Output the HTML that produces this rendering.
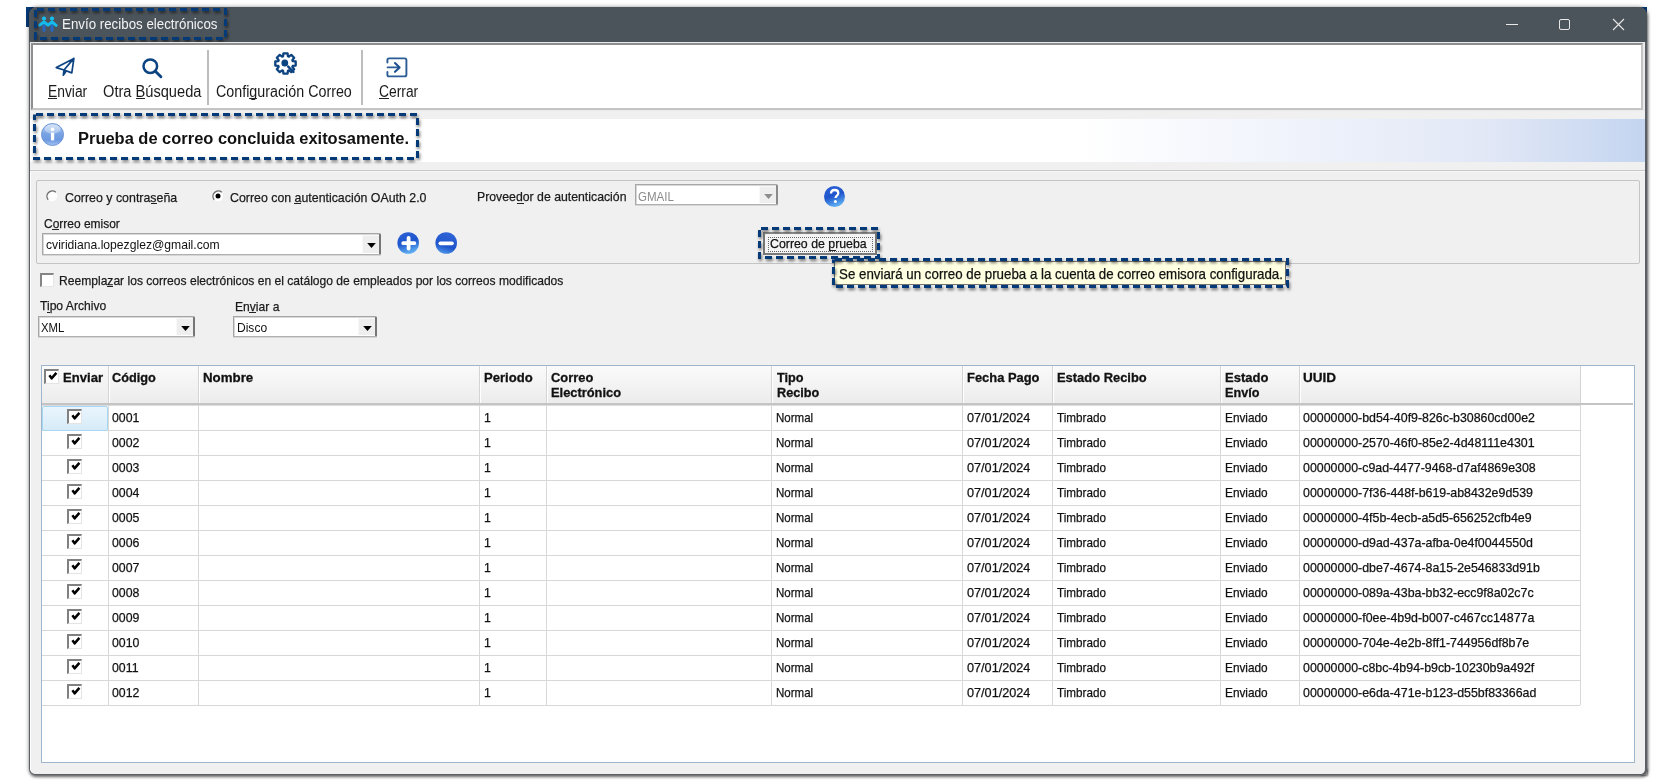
<!DOCTYPE html><html><head><meta charset="utf-8"><style>
*{box-sizing:border-box}
body{margin:0;width:1656px;height:784px;background:#fff;position:relative;overflow:hidden;font-family:'Liberation Sans', sans-serif}
.a{position:absolute}
.t{position:absolute;white-space:nowrap;line-height:0;transform-origin:0 0}
</style></head><body>
<div class="a" style="left:26px;top:7px;width:8px;height:20px;background:#063b79"></div>
<div class="a" style="left:1640px;top:7px;width:7px;height:6px;background:#063b79"></div>
<div class="a" style="left:1640px;top:768px;width:7px;height:7px;background:#dcdcdc;box-shadow:1px 1px 2px rgba(0,0,0,.4)"></div>
<div class="a" style="left:29px;top:7px;width:1618px;height:768px;background:#f0f0f0;border-radius:8px 8px 6px 6px;border:1px solid #5a6066;border-right-width:2px;box-shadow:0 0 4px rgba(0,0,0,.4),1px 2px 3px rgba(0,0,0,.5)"></div>
<div class="a" style="left:29px;top:7px;width:1618px;height:35px;background:#4c545b;border-radius:8px 8px 0 0"></div>
<svg class="a" style="left:36px;top:12px" width="25" height="22" viewBox="0 0 25 22">
<path d="M8 13.5 V18.3 M16 13.5 V18.3" stroke="#2767bf" stroke-width="3.2" stroke-linecap="round"/>
<path d="M3.6 13.2 L8 10 L12 13.2 L16 10 L20.2 13.4" stroke="#14bbee" stroke-width="2.9" fill="none" stroke-linecap="round" stroke-linejoin="round"/>
<circle cx="8" cy="6.6" r="2.1" fill="#14bff0"/><circle cx="16" cy="6.6" r="2.1" fill="#14bff0"/>
</svg>
<div class="t" style="left:62px;top:24px;font-size:14.5px;color:#f2f2f2;transform:scaleX(0.9188)">Envío recibos electrónicos</div>
<svg style="position:absolute;left:30px;top:4px;overflow:visible;filter:drop-shadow(1px 2px 1.5px rgba(0,0,0,.55))" width="201" height="40"><rect x="5.5" y="5.5" width="190" height="29" fill="none" stroke="#053a78" stroke-width="3" stroke-dasharray="7 4" stroke-dashoffset="-1.5"/></svg>
<div class="a" style="left:1506px;top:24px;width:12px;height:1px;background:#e8e8e8"></div>
<div class="a" style="left:1559px;top:19px;width:11px;height:11px;border:1px solid #e8e8e8;border-radius:2px"></div>
<svg class="a" style="left:1612px;top:18px" width="13" height="13"><path d="M1 1 L12 12 M12 1 L1 12" stroke="#e8e8e8" stroke-width="1.1"/></svg>
<div class="a" style="left:30px;top:42px;width:1615px;height:69px;background:#e9e9e9"></div>
<div class="a" style="left:31px;top:43px;width:1612px;height:67px;background:#fff;border-top:2px solid #8e8e8e;border-left:2px solid #8e8e8e;border-bottom:2px solid #c4c4c4;border-right:2px solid #c4c4c4"></div>
<div class="a" style="left:207px;top:50px;width:2px;height:55px;background:#bdbdbd"></div>
<div class="a" style="left:361px;top:50px;width:2px;height:55px;background:#bdbdbd"></div>
<svg class="a" style="left:50px;top:52px" width="30" height="30" viewBox="0 0 30 30">
<path d="M6.3 15.6 L23.9 6.4 L21.8 20.9 L14 18 Z M14 18 L23.9 6.4 M14 18 L13.3 23.2 L16.2 19" fill="none" stroke="#0c4381" stroke-width="1.7" stroke-linejoin="round" stroke-linecap="round"/></svg>
<svg class="a" style="left:140px;top:56px" width="26" height="24" viewBox="0 0 26 24">
<circle cx="10.3" cy="10.2" r="6.8" fill="none" stroke="#0c4381" stroke-width="2.5"/><path d="M15.3 15.3 L20.9 20.8" stroke="#0c4381" stroke-width="2.9" stroke-linecap="round"/></svg>
<svg class="a" style="left:273.5px;top:51.8px" width="23" height="23" viewBox="0 0 23 23">
<polygon points="9.04,4.31 9.43,1.31 13.57,1.31 13.96,4.31 14.84,4.67 17.25,2.83 20.17,5.75 18.33,8.16 18.69,9.04 21.69,9.43 21.69,13.57 18.69,13.96 18.33,14.84 20.17,17.25 17.25,20.17 14.84,18.33 13.96,18.69 13.57,21.69 9.43,21.69 9.04,18.69 8.16,18.33 5.75,20.17 2.83,17.25 4.67,14.84 4.31,13.96 1.31,13.57 1.31,9.43 4.31,9.04 4.67,8.16 2.83,5.75 5.75,2.83 8.16,4.67" fill="none" stroke="#0c4381" stroke-width="2.3" stroke-linejoin="round"/>
<ellipse cx="10.8" cy="11" rx="3.4" ry="3.6" fill="#0c4381"/><path d="M14.2 14.6 L19.5 20" stroke="#0c4381" stroke-width="2.4" stroke-linecap="round"/>
<path d="M15.5 12.2 L17 13.8" stroke="#fff" stroke-width="1"/></svg>
<svg class="a" style="left:380px;top:50px" width="35" height="35" viewBox="0 0 35 35">
<path d="M7.4 12.5 V10 Q7.4 8.4 9 8.4 H24.8 Q26.4 8.4 26.4 10 V24.8 Q26.4 26.4 24.8 26.4 H9 Q7.4 26.4 7.4 24.8 V22" fill="none" stroke="#2b5c96" stroke-width="1.9" stroke-linecap="round"/>
<path d="M7.6 17.4 H18.5" stroke="#2b5c96" stroke-width="1.9" stroke-linecap="round"/>
<path d="M15 13 L19.6 17.4 L15 21.8" fill="none" stroke="#1f5090" stroke-width="2.1" stroke-linecap="round" stroke-linejoin="round"/></svg>
<div class="t" style="left:48px;top:92px;font-size:16px;color:#1a1a1a;transform:scaleX(0.8642)">Enviar</div>
<div class="a" style="left:48px;top:98px;width:9px;height:1px;background:#222"></div>
<div class="t" style="left:102.5px;top:92px;font-size:16px;color:#1a1a1a;transform:scaleX(0.9143)">Otra Búsqueda</div>
<div class="a" style="left:136px;top:98px;width:9px;height:1px;background:#222"></div>
<div class="t" style="left:216px;top:92px;font-size:16px;color:#1a1a1a;transform:scaleX(0.8930)">Configuración Correo</div>
<div class="a" style="left:249px;top:98px;width:8px;height:1px;background:#222"></div>
<div class="t" style="left:379px;top:92px;font-size:16px;color:#1a1a1a;transform:scaleX(0.8645)">Cerrar</div>
<div class="a" style="left:379px;top:98px;width:10px;height:1px;background:#222"></div>
<div class="a" style="left:30px;top:119px;width:1615px;height:43px;background:linear-gradient(to right,#ffffff 0%,#ffffff 65%,#f2f5fc 76%,#e2e8f6 90%,#c4d5f0 100%)"></div>
<svg class="a" style="left:40px;top:122px" width="25" height="25" viewBox="0 0 25 25">
<defs><linearGradient id="ig" x1="0" y1="0" x2="0" y2="1"><stop offset="0" stop-color="#c4d8f6"/><stop offset="0.45" stop-color="#7aa4e4"/><stop offset="0.75" stop-color="#6b98e0"/><stop offset="1" stop-color="#a6c6f6"/></linearGradient></defs>
<circle cx="12.5" cy="12.5" r="11" fill="url(#ig)" stroke="#6c95d4" stroke-width="1"/>
<ellipse cx="12.5" cy="7" rx="8" ry="4.5" fill="#fff" opacity="0.35"/>
<circle cx="12.5" cy="7.3" r="1.9" fill="#fff"/><rect x="10.9" y="10.6" width="3.3" height="7.8" fill="#fff"/></svg>
<div class="t" style="left:77.5px;top:138.5px;font-size:16px;font-weight:bold;color:#111;transform:scaleX(1.0283)">Prueba de correo concluida exitosamente.</div>
<svg style="position:absolute;left:29px;top:109px;overflow:visible;filter:drop-shadow(1px 2px 1.5px rgba(0,0,0,.55))" width="394" height="55"><rect x="5.5" y="5.5" width="383" height="44" fill="none" stroke="#053a78" stroke-width="3" stroke-dasharray="7 4" stroke-dashoffset="-1.5"/></svg>
<div class="a" style="left:30px;top:172px;width:1px;height:598px;background:#fff"></div>
<div class="a" style="left:30px;top:170px;width:1615px;height:1px;background:#c8c8c8"></div>
<div class="a" style="left:30px;top:171px;width:1615px;height:1px;background:#f6f6f6"></div>
<div class="a" style="left:36px;top:180px;width:1604px;height:84px;border:1px solid #c4c4c4;border-radius:2px"></div>
<svg class="a" style="left:45px;top:189px" width="14" height="14" viewBox="0 0 14 14"><circle cx="7" cy="7" r="5.2" fill="#fff"/><path d="M3.2 10.8 A5.4 5.4 0 0 1 10.8 3.2" fill="none" stroke="#6e6e6e" stroke-width="1.4"/></svg>
<div class="t" style="left:64.5px;top:197.5px;font-size:13.5px;-webkit-text-stroke:0.25px #1a1a1a;color:#1a1a1a;transform:scaleX(0.9173)">Correo y contraseña</div>
<div class="a" style="left:151px;top:203px;width:6px;height:1px;background:#222"></div>
<svg class="a" style="left:211px;top:189px" width="14" height="14" viewBox="0 0 14 14"><circle cx="7" cy="7" r="5.2" fill="#fff"/><path d="M3.2 10.8 A5.4 5.4 0 0 1 10.8 3.2" fill="none" stroke="#6e6e6e" stroke-width="1.4"/><circle cx="7" cy="7" r="2.5" fill="#000"/></svg>
<div class="t" style="left:230px;top:197.5px;font-size:13.5px;-webkit-text-stroke:0.25px #1a1a1a;color:#1a1a1a;transform:scaleX(0.9155)">Correo con autenticación OAuth 2.0</div>
<div class="a" style="left:294px;top:203px;width:7px;height:1px;background:#222"></div>
<div class="t" style="left:477px;top:197px;font-size:13.5px;-webkit-text-stroke:0.25px #1a1a1a;color:#1a1a1a;transform:scaleX(0.9095)">Proveedor de autenticación</div>
<div class="a" style="left:517px;top:203px;width:7px;height:1px;background:#222"></div>
<div class="a" style="left:635px;top:184px;width:143px;height:20px;background:#fff;border-top:1px solid #a6a6a6;border-left:1px solid #a6a6a6;border-right:2px solid #8a8a8a;border-top-right-radius:2px;box-shadow:inset 1px 1px 0 #d8d8d8"></div><div class="a" style="left:759px;top:186px;width:17px;height:17px;background:#eeeeee;border-left:1px solid #f8f8f8;border-top:1px solid #f8f8f8"></div><div class="a" style="left:635px;top:204px;width:143px;height:1px;background:#b0b0b0"></div><div class="a" style="left:635px;top:205px;width:143px;height:1px;background:#d6d6d6"></div><svg class="a" style="left:763.9px;top:194px" width="9" height="6"><path d="M0.2 0 H8.8 L4.5 5 Z" fill="#8c8c8c"/></svg><div class="t" style="left:638px;top:196.5px;font-size:13px;color:#8c8c8c;transform:scaleX(0.8871)">GMAIL</div>
<svg class="a" style="left:823px;top:185px" width="23" height="23" viewBox="0 0 23 23">
<defs><linearGradient id="hg" x1="0" y1="0" x2="0.35" y2="1"><stop offset="0" stop-color="#2d62d6"/><stop offset="0.55" stop-color="#1f55cc"/><stop offset="1" stop-color="#5aa9f0"/></linearGradient></defs>
<circle cx="11.5" cy="11.5" r="10.5" fill="url(#hg)"/>
<path d="M8 8.6 C8 6 10 5 11.7 5 C13.8 5 15.3 6.3 15.3 8.2 C15.3 10.4 12.5 10.8 12.5 13" fill="none" stroke="#fff" stroke-width="2.3"/>
<circle cx="12.4" cy="16.6" r="1.5" fill="#fff"/></svg>
<div class="t" style="left:43.5px;top:223.5px;font-size:13.5px;-webkit-text-stroke:0.25px #1a1a1a;color:#1a1a1a;transform:scaleX(0.8862)">Correo emisor</div>
<div class="a" style="left:52px;top:229px;width:7px;height:1px;background:#222"></div>
<div class="a" style="left:42px;top:233px;width:339px;height:21px;background:#fff;border-top:1px solid #a6a6a6;border-left:1px solid #a6a6a6;border-right:2px solid #767676;border-top-right-radius:2px;box-shadow:inset 1px 1px 0 #d8d8d8"></div><div class="a" style="left:362px;top:235px;width:17px;height:18px;background:#eeeeee;border-left:1px solid #f8f8f8;border-top:1px solid #f8f8f8"></div><div class="a" style="left:42px;top:254px;width:339px;height:1px;background:#b0b0b0"></div><div class="a" style="left:42px;top:255px;width:339px;height:1px;background:#d6d6d6"></div><svg class="a" style="left:366.9px;top:243px" width="9" height="6"><path d="M0.2 0 H8.8 L4.5 5 Z" fill="#000"/></svg><div class="t" style="left:46px;top:245px;font-size:13.5px;color:#111;transform:scaleX(0.8993)">cviridiana.lopezglez@gmail.com</div>
<svg class="a" style="left:397px;top:232px" width="23" height="23" viewBox="0 0 23 23">
<defs><linearGradient id="pg" x1="0" y1="0" x2="0.3" y2="1"><stop offset="0" stop-color="#2d62d6"/><stop offset="0.55" stop-color="#1f55cc"/><stop offset="1" stop-color="#5aa9f0"/></linearGradient></defs>
<circle cx="11.2" cy="11" r="10.8" fill="url(#pg)"/><path d="M11.6 5.8 V16.5 M6.2 11.2 H17.3" stroke="#fff" stroke-width="3.8" stroke-linecap="round"/></svg>
<svg class="a" style="left:435px;top:232px" width="23" height="23" viewBox="0 0 23 23">
<defs><linearGradient id="mg" x1="0.3" y1="0" x2="0" y2="1"><stop offset="0" stop-color="#2d62d6"/><stop offset="0.55" stop-color="#1f55cc"/><stop offset="1" stop-color="#5aa9f0"/></linearGradient></defs>
<circle cx="11.2" cy="11" r="10.8" fill="url(#mg)"/><path d="M5.4 11.3 H16.9" stroke="#fff" stroke-width="3.8" stroke-linecap="round"/></svg>
<div class="a" style="left:763px;top:232px;width:114px;height:23px;background:#f4f4f4;border:2px solid #7a7a7a;border-top-color:#8a8a8a"></div>
<div class="a" style="left:768px;top:237px;width:105px;height:15px;border:1px dotted #666"></div>
<div class="t" style="left:770px;top:244px;font-size:13.5px;-webkit-text-stroke:0.25px #111;color:#111;transform:scaleX(0.9137)">Correo de prueba</div>
<div class="a" style="left:829px;top:250px;width:7px;height:1px;background:#222"></div>
<svg style="position:absolute;left:754px;top:223px;overflow:visible;filter:drop-shadow(1px 2px 1.5px rgba(0,0,0,.55))" width="130" height="40"><rect x="5.5" y="5.5" width="119" height="29" fill="none" stroke="#053a78" stroke-width="3" stroke-dasharray="7 4" stroke-dashoffset="-1.5"/></svg>
<div class="a" style="left:834px;top:261px;width:452px;height:24px;background:#ffffe1;border:1px solid #767676"></div>
<div class="t" style="left:838.5px;top:273.5px;font-size:14.5px;-webkit-text-stroke:0.25px #111;color:#111;transform:scaleX(0.9180)">Se enviará un correo de prueba a la cuenta de correo emisora configurada.</div>
<svg style="position:absolute;left:828px;top:254px;overflow:visible;filter:drop-shadow(1px 2px 1.5px rgba(0,0,0,.55))" width="465" height="38"><rect x="5.5" y="5.5" width="454" height="27" fill="none" stroke="#053a78" stroke-width="3" stroke-dasharray="7 4" stroke-dashoffset="-1.5"/></svg>
<div class="a" style="left:40px;top:273px;width:14px;height:14px;background:#fff;border-top:2px solid #858585;border-left:2px solid #858585;border-right:1px solid #e6e6e6;border-bottom:1px solid #e6e6e6"></div>
<div class="a" style="left:107px;top:286px;width:6px;height:1px;background:#222"></div>
<div class="a" style="left:47px;top:312px;width:3px;height:1px;background:#222"></div>
<div class="a" style="left:249px;top:312px;width:7px;height:1px;background:#222"></div>
<div class="t" style="left:59px;top:280.5px;font-size:13.5px;-webkit-text-stroke:0.25px #1a1a1a;color:#1a1a1a;transform:scaleX(0.8950)">Reemplazar los correos electrónicos en el catálogo de empleados por los correos modificados</div>
<div class="t" style="left:40px;top:306.3px;font-size:13.5px;-webkit-text-stroke:0.25px #1a1a1a;color:#1a1a1a;transform:scaleX(0.8971)">Tipo Archivo</div>
<div class="t" style="left:234.5px;top:306.5px;font-size:13.5px;-webkit-text-stroke:0.25px #1a1a1a;color:#1a1a1a;transform:scaleX(0.8964)">Enviar a</div>
<div class="a" style="left:38px;top:316px;width:157px;height:20px;background:#fff;border-top:1px solid #a6a6a6;border-left:1px solid #a6a6a6;border-right:2px solid #767676;border-top-right-radius:2px;box-shadow:inset 1px 1px 0 #d8d8d8"></div><div class="a" style="left:176px;top:318px;width:17px;height:17px;background:#eeeeee;border-left:1px solid #f8f8f8;border-top:1px solid #f8f8f8"></div><div class="a" style="left:38px;top:336px;width:157px;height:1px;background:#b0b0b0"></div><div class="a" style="left:38px;top:337px;width:157px;height:1px;background:#d6d6d6"></div><svg class="a" style="left:180.5px;top:326px" width="9" height="6"><path d="M0.2 0 H8.8 L4.5 5 Z" fill="#000"/></svg><div class="t" style="left:40.5px;top:328px;font-size:13.5px;color:#111;transform:scaleX(0.8428)">XML</div>
<div class="a" style="left:233px;top:316px;width:144px;height:20px;background:#fff;border-top:1px solid #a6a6a6;border-left:1px solid #a6a6a6;border-right:2px solid #767676;border-top-right-radius:2px;box-shadow:inset 1px 1px 0 #d8d8d8"></div><div class="a" style="left:358px;top:318px;width:17px;height:17px;background:#eeeeee;border-left:1px solid #f8f8f8;border-top:1px solid #f8f8f8"></div><div class="a" style="left:233px;top:336px;width:144px;height:1px;background:#b0b0b0"></div><div class="a" style="left:233px;top:337px;width:144px;height:1px;background:#d6d6d6"></div><svg class="a" style="left:362.5px;top:326px" width="9" height="6"><path d="M0.2 0 H8.8 L4.5 5 Z" fill="#000"/></svg><div class="t" style="left:236.5px;top:328px;font-size:13.5px;color:#111;transform:scaleX(0.8914)">Disco</div>
<div class="a" style="left:41px;top:365px;width:1594px;height:398px;background:#fff;border:1px solid #9fb5cc"></div>
<div class="a" style="left:42px;top:366px;width:1538px;height:37px;background:linear-gradient(#fafafa,#ececec)"></div>
<div class="a" style="left:42px;top:403px;width:1591px;height:2px;background:#c4c4c4"></div>
<div class="a" style="left:42px;top:405px;width:1538px;height:1px;background:#dcdcdc"></div>
<div class="a" style="left:108px;top:366px;width:1px;height:37px;background:#d4d4d4"></div>
<div class="a" style="left:109px;top:366px;width:1px;height:37px;background:#fff"></div>
<div class="a" style="left:198px;top:366px;width:1px;height:37px;background:#d4d4d4"></div>
<div class="a" style="left:199px;top:366px;width:1px;height:37px;background:#fff"></div>
<div class="a" style="left:479px;top:366px;width:1px;height:37px;background:#d4d4d4"></div>
<div class="a" style="left:480px;top:366px;width:1px;height:37px;background:#fff"></div>
<div class="a" style="left:546px;top:366px;width:1px;height:37px;background:#d4d4d4"></div>
<div class="a" style="left:547px;top:366px;width:1px;height:37px;background:#fff"></div>
<div class="a" style="left:771px;top:366px;width:1px;height:37px;background:#d4d4d4"></div>
<div class="a" style="left:772px;top:366px;width:1px;height:37px;background:#fff"></div>
<div class="a" style="left:962px;top:366px;width:1px;height:37px;background:#d4d4d4"></div>
<div class="a" style="left:963px;top:366px;width:1px;height:37px;background:#fff"></div>
<div class="a" style="left:1052px;top:366px;width:1px;height:37px;background:#d4d4d4"></div>
<div class="a" style="left:1053px;top:366px;width:1px;height:37px;background:#fff"></div>
<div class="a" style="left:1220px;top:366px;width:1px;height:37px;background:#d4d4d4"></div>
<div class="a" style="left:1221px;top:366px;width:1px;height:37px;background:#fff"></div>
<div class="a" style="left:1299px;top:366px;width:1px;height:37px;background:#d4d4d4"></div>
<div class="a" style="left:1300px;top:366px;width:1px;height:37px;background:#fff"></div>
<div class="a" style="left:1580px;top:366px;width:1px;height:37px;background:#d4d4d4"></div>
<div class="a" style="left:1581px;top:366px;width:1px;height:37px;background:#fff"></div>
<div class="t" style="left:62.5px;top:378px;font-size:13.5px;font-weight:bold;-webkit-text-stroke:0.3px #111;color:#111;transform:scaleX(0.9690)">Enviar</div>
<div class="t" style="left:112px;top:378px;font-size:13.5px;font-weight:bold;-webkit-text-stroke:0.3px #111;color:#111;transform:scaleX(0.9419)">Código</div>
<div class="t" style="left:202.5px;top:378px;font-size:13.5px;font-weight:bold;-webkit-text-stroke:0.3px #111;color:#111;transform:scaleX(0.9840)">Nombre</div>
<div class="t" style="left:483.5px;top:378px;font-size:13.5px;font-weight:bold;-webkit-text-stroke:0.3px #111;color:#111;transform:scaleX(0.9689)">Periodo</div>
<div class="t" style="left:551px;top:378px;font-size:13.5px;font-weight:bold;-webkit-text-stroke:0.3px #111;color:#111;transform:scaleX(0.9556)">Correo</div>
<div class="t" style="left:551px;top:392.7px;font-size:13.5px;font-weight:bold;-webkit-text-stroke:0.3px #111;color:#111;transform:scaleX(0.9520)">Electrónico</div>
<div class="t" style="left:776.5px;top:378px;font-size:13.5px;font-weight:bold;-webkit-text-stroke:0.3px #111;color:#111;transform:scaleX(0.9416)">Tipo</div>
<div class="t" style="left:776.5px;top:392.7px;font-size:13.5px;font-weight:bold;-webkit-text-stroke:0.3px #111;color:#111;transform:scaleX(0.9397)">Recibo</div>
<div class="t" style="left:966.5px;top:378px;font-size:13.5px;font-weight:bold;-webkit-text-stroke:0.3px #111;color:#111;transform:scaleX(0.9567)">Fecha Pago</div>
<div class="t" style="left:1056.5px;top:378px;font-size:13.5px;font-weight:bold;-webkit-text-stroke:0.3px #111;color:#111;transform:scaleX(0.9565)">Estado Recibo</div>
<div class="t" style="left:1224.5px;top:378px;font-size:13.5px;font-weight:bold;-webkit-text-stroke:0.3px #111;color:#111;transform:scaleX(0.9663)">Estado</div>
<div class="t" style="left:1224.5px;top:392.7px;font-size:13.5px;font-weight:bold;-webkit-text-stroke:0.3px #111;color:#111;transform:scaleX(0.9357)">Envío</div>
<div class="t" style="left:1303px;top:378px;font-size:13.5px;font-weight:bold;-webkit-text-stroke:0.3px #111;color:#111;transform:scaleX(1.0030)">UUID</div>
<div class="a" style="left:44px;top:369px;width:15px;height:15px;background:#fff;border-top:2px solid #808080;border-left:2px solid #808080;border-right:1px solid #e4e4e4;border-bottom:1px solid #e4e4e4"></div><svg class="a" style="left:47px;top:372px" width="12" height="10" viewBox="0 0 12 10"><path d="M2.4 3.2 L4.6 6.4 L9.4 0.9" fill="none" stroke="#000" stroke-width="2.5" stroke-linejoin="round"/></svg>
<div class="a" style="left:42px;top:430px;width:1538px;height:1px;background:#d8d8d8"></div>
<div class="a" style="left:108px;top:405px;width:1px;height:25px;background:#d8d8d8"></div>
<div class="a" style="left:198px;top:405px;width:1px;height:25px;background:#d8d8d8"></div>
<div class="a" style="left:479px;top:405px;width:1px;height:25px;background:#d8d8d8"></div>
<div class="a" style="left:546px;top:405px;width:1px;height:25px;background:#d8d8d8"></div>
<div class="a" style="left:771px;top:405px;width:1px;height:25px;background:#d8d8d8"></div>
<div class="a" style="left:962px;top:405px;width:1px;height:25px;background:#d8d8d8"></div>
<div class="a" style="left:1052px;top:405px;width:1px;height:25px;background:#d8d8d8"></div>
<div class="a" style="left:1220px;top:405px;width:1px;height:25px;background:#d8d8d8"></div>
<div class="a" style="left:1299px;top:405px;width:1px;height:25px;background:#d8d8d8"></div>
<div class="a" style="left:1580px;top:405px;width:1px;height:25px;background:#d8d8d8"></div>
<div class="a" style="left:42px;top:406px;width:66px;height:25px;background:linear-gradient(#eaf5fd,#d6ebf8);border:1px solid #a6d8f4;border-radius:2px"></div>
<div class="a" style="left:67px;top:409px;width:15px;height:15px;background:#fff;border-top:2px solid #808080;border-left:2px solid #808080;border-right:1px solid #e4e4e4;border-bottom:1px solid #e4e4e4"></div><svg class="a" style="left:70px;top:412px" width="12" height="10" viewBox="0 0 12 10"><path d="M2.4 3.2 L4.6 6.4 L9.4 0.9" fill="none" stroke="#000" stroke-width="2.5" stroke-linejoin="round"/></svg>
<div class="t" style="left:112px;top:418px;font-size:13px;-webkit-text-stroke:0.25px #111;color:#111;transform:scaleX(0.9474)">0001</div>
<div class="t" style="left:483.5px;top:418px;font-size:13px;-webkit-text-stroke:0.25px #111;color:#111;transform:scaleX(0.9474)">1</div>
<div class="t" style="left:775.5px;top:418px;font-size:13px;-webkit-text-stroke:0.25px #111;color:#111;transform:scaleX(0.8853)">Normal</div>
<div class="t" style="left:966.5px;top:418px;font-size:13px;-webkit-text-stroke:0.25px #111;color:#111;transform:scaleX(0.9742)">07/01/2024</div>
<div class="t" style="left:1056.5px;top:418px;font-size:13px;-webkit-text-stroke:0.25px #111;color:#111;transform:scaleX(0.8983)">Timbrado</div>
<div class="t" style="left:1224.5px;top:418px;font-size:13px;-webkit-text-stroke:0.25px #111;color:#111;transform:scaleX(0.9088)">Enviado</div>
<div class="t" style="left:1303px;top:418px;font-size:13px;-webkit-text-stroke:0.25px #111;color:#111;transform:scaleX(0.9523)">00000000-bd54-40f9-826c-b30860cd00e2</div>
<div class="a" style="left:42px;top:455px;width:1538px;height:1px;background:#d8d8d8"></div>
<div class="a" style="left:108px;top:430px;width:1px;height:25px;background:#d8d8d8"></div>
<div class="a" style="left:198px;top:430px;width:1px;height:25px;background:#d8d8d8"></div>
<div class="a" style="left:479px;top:430px;width:1px;height:25px;background:#d8d8d8"></div>
<div class="a" style="left:546px;top:430px;width:1px;height:25px;background:#d8d8d8"></div>
<div class="a" style="left:771px;top:430px;width:1px;height:25px;background:#d8d8d8"></div>
<div class="a" style="left:962px;top:430px;width:1px;height:25px;background:#d8d8d8"></div>
<div class="a" style="left:1052px;top:430px;width:1px;height:25px;background:#d8d8d8"></div>
<div class="a" style="left:1220px;top:430px;width:1px;height:25px;background:#d8d8d8"></div>
<div class="a" style="left:1299px;top:430px;width:1px;height:25px;background:#d8d8d8"></div>
<div class="a" style="left:1580px;top:430px;width:1px;height:25px;background:#d8d8d8"></div>
<div class="a" style="left:67px;top:434px;width:15px;height:15px;background:#fff;border-top:2px solid #808080;border-left:2px solid #808080;border-right:1px solid #e4e4e4;border-bottom:1px solid #e4e4e4"></div><svg class="a" style="left:70px;top:437px" width="12" height="10" viewBox="0 0 12 10"><path d="M2.4 3.2 L4.6 6.4 L9.4 0.9" fill="none" stroke="#000" stroke-width="2.5" stroke-linejoin="round"/></svg>
<div class="t" style="left:112px;top:443px;font-size:13px;-webkit-text-stroke:0.25px #111;color:#111;transform:scaleX(0.9474)">0002</div>
<div class="t" style="left:483.5px;top:443px;font-size:13px;-webkit-text-stroke:0.25px #111;color:#111;transform:scaleX(0.9474)">1</div>
<div class="t" style="left:775.5px;top:443px;font-size:13px;-webkit-text-stroke:0.25px #111;color:#111;transform:scaleX(0.8853)">Normal</div>
<div class="t" style="left:966.5px;top:443px;font-size:13px;-webkit-text-stroke:0.25px #111;color:#111;transform:scaleX(0.9742)">07/01/2024</div>
<div class="t" style="left:1056.5px;top:443px;font-size:13px;-webkit-text-stroke:0.25px #111;color:#111;transform:scaleX(0.8983)">Timbrado</div>
<div class="t" style="left:1224.5px;top:443px;font-size:13px;-webkit-text-stroke:0.25px #111;color:#111;transform:scaleX(0.9088)">Enviado</div>
<div class="t" style="left:1303px;top:443px;font-size:13px;-webkit-text-stroke:0.25px #111;color:#111;transform:scaleX(0.9523)">00000000-2570-46f0-85e2-4d48111e4301</div>
<div class="a" style="left:42px;top:480px;width:1538px;height:1px;background:#d8d8d8"></div>
<div class="a" style="left:108px;top:455px;width:1px;height:25px;background:#d8d8d8"></div>
<div class="a" style="left:198px;top:455px;width:1px;height:25px;background:#d8d8d8"></div>
<div class="a" style="left:479px;top:455px;width:1px;height:25px;background:#d8d8d8"></div>
<div class="a" style="left:546px;top:455px;width:1px;height:25px;background:#d8d8d8"></div>
<div class="a" style="left:771px;top:455px;width:1px;height:25px;background:#d8d8d8"></div>
<div class="a" style="left:962px;top:455px;width:1px;height:25px;background:#d8d8d8"></div>
<div class="a" style="left:1052px;top:455px;width:1px;height:25px;background:#d8d8d8"></div>
<div class="a" style="left:1220px;top:455px;width:1px;height:25px;background:#d8d8d8"></div>
<div class="a" style="left:1299px;top:455px;width:1px;height:25px;background:#d8d8d8"></div>
<div class="a" style="left:1580px;top:455px;width:1px;height:25px;background:#d8d8d8"></div>
<div class="a" style="left:67px;top:459px;width:15px;height:15px;background:#fff;border-top:2px solid #808080;border-left:2px solid #808080;border-right:1px solid #e4e4e4;border-bottom:1px solid #e4e4e4"></div><svg class="a" style="left:70px;top:462px" width="12" height="10" viewBox="0 0 12 10"><path d="M2.4 3.2 L4.6 6.4 L9.4 0.9" fill="none" stroke="#000" stroke-width="2.5" stroke-linejoin="round"/></svg>
<div class="t" style="left:112px;top:468px;font-size:13px;-webkit-text-stroke:0.25px #111;color:#111;transform:scaleX(0.9474)">0003</div>
<div class="t" style="left:483.5px;top:468px;font-size:13px;-webkit-text-stroke:0.25px #111;color:#111;transform:scaleX(0.9474)">1</div>
<div class="t" style="left:775.5px;top:468px;font-size:13px;-webkit-text-stroke:0.25px #111;color:#111;transform:scaleX(0.8853)">Normal</div>
<div class="t" style="left:966.5px;top:468px;font-size:13px;-webkit-text-stroke:0.25px #111;color:#111;transform:scaleX(0.9742)">07/01/2024</div>
<div class="t" style="left:1056.5px;top:468px;font-size:13px;-webkit-text-stroke:0.25px #111;color:#111;transform:scaleX(0.8983)">Timbrado</div>
<div class="t" style="left:1224.5px;top:468px;font-size:13px;-webkit-text-stroke:0.25px #111;color:#111;transform:scaleX(0.9088)">Enviado</div>
<div class="t" style="left:1303px;top:468px;font-size:13px;-webkit-text-stroke:0.25px #111;color:#111;transform:scaleX(0.9523)">00000000-c9ad-4477-9468-d7af4869e308</div>
<div class="a" style="left:42px;top:505px;width:1538px;height:1px;background:#d8d8d8"></div>
<div class="a" style="left:108px;top:480px;width:1px;height:25px;background:#d8d8d8"></div>
<div class="a" style="left:198px;top:480px;width:1px;height:25px;background:#d8d8d8"></div>
<div class="a" style="left:479px;top:480px;width:1px;height:25px;background:#d8d8d8"></div>
<div class="a" style="left:546px;top:480px;width:1px;height:25px;background:#d8d8d8"></div>
<div class="a" style="left:771px;top:480px;width:1px;height:25px;background:#d8d8d8"></div>
<div class="a" style="left:962px;top:480px;width:1px;height:25px;background:#d8d8d8"></div>
<div class="a" style="left:1052px;top:480px;width:1px;height:25px;background:#d8d8d8"></div>
<div class="a" style="left:1220px;top:480px;width:1px;height:25px;background:#d8d8d8"></div>
<div class="a" style="left:1299px;top:480px;width:1px;height:25px;background:#d8d8d8"></div>
<div class="a" style="left:1580px;top:480px;width:1px;height:25px;background:#d8d8d8"></div>
<div class="a" style="left:67px;top:484px;width:15px;height:15px;background:#fff;border-top:2px solid #808080;border-left:2px solid #808080;border-right:1px solid #e4e4e4;border-bottom:1px solid #e4e4e4"></div><svg class="a" style="left:70px;top:487px" width="12" height="10" viewBox="0 0 12 10"><path d="M2.4 3.2 L4.6 6.4 L9.4 0.9" fill="none" stroke="#000" stroke-width="2.5" stroke-linejoin="round"/></svg>
<div class="t" style="left:112px;top:493px;font-size:13px;-webkit-text-stroke:0.25px #111;color:#111;transform:scaleX(0.9474)">0004</div>
<div class="t" style="left:483.5px;top:493px;font-size:13px;-webkit-text-stroke:0.25px #111;color:#111;transform:scaleX(0.9474)">1</div>
<div class="t" style="left:775.5px;top:493px;font-size:13px;-webkit-text-stroke:0.25px #111;color:#111;transform:scaleX(0.8853)">Normal</div>
<div class="t" style="left:966.5px;top:493px;font-size:13px;-webkit-text-stroke:0.25px #111;color:#111;transform:scaleX(0.9742)">07/01/2024</div>
<div class="t" style="left:1056.5px;top:493px;font-size:13px;-webkit-text-stroke:0.25px #111;color:#111;transform:scaleX(0.8983)">Timbrado</div>
<div class="t" style="left:1224.5px;top:493px;font-size:13px;-webkit-text-stroke:0.25px #111;color:#111;transform:scaleX(0.9088)">Enviado</div>
<div class="t" style="left:1303px;top:493px;font-size:13px;-webkit-text-stroke:0.25px #111;color:#111;transform:scaleX(0.9523)">00000000-7f36-448f-b619-ab8432e9d539</div>
<div class="a" style="left:42px;top:530px;width:1538px;height:1px;background:#d8d8d8"></div>
<div class="a" style="left:108px;top:505px;width:1px;height:25px;background:#d8d8d8"></div>
<div class="a" style="left:198px;top:505px;width:1px;height:25px;background:#d8d8d8"></div>
<div class="a" style="left:479px;top:505px;width:1px;height:25px;background:#d8d8d8"></div>
<div class="a" style="left:546px;top:505px;width:1px;height:25px;background:#d8d8d8"></div>
<div class="a" style="left:771px;top:505px;width:1px;height:25px;background:#d8d8d8"></div>
<div class="a" style="left:962px;top:505px;width:1px;height:25px;background:#d8d8d8"></div>
<div class="a" style="left:1052px;top:505px;width:1px;height:25px;background:#d8d8d8"></div>
<div class="a" style="left:1220px;top:505px;width:1px;height:25px;background:#d8d8d8"></div>
<div class="a" style="left:1299px;top:505px;width:1px;height:25px;background:#d8d8d8"></div>
<div class="a" style="left:1580px;top:505px;width:1px;height:25px;background:#d8d8d8"></div>
<div class="a" style="left:67px;top:509px;width:15px;height:15px;background:#fff;border-top:2px solid #808080;border-left:2px solid #808080;border-right:1px solid #e4e4e4;border-bottom:1px solid #e4e4e4"></div><svg class="a" style="left:70px;top:512px" width="12" height="10" viewBox="0 0 12 10"><path d="M2.4 3.2 L4.6 6.4 L9.4 0.9" fill="none" stroke="#000" stroke-width="2.5" stroke-linejoin="round"/></svg>
<div class="t" style="left:112px;top:518px;font-size:13px;-webkit-text-stroke:0.25px #111;color:#111;transform:scaleX(0.9474)">0005</div>
<div class="t" style="left:483.5px;top:518px;font-size:13px;-webkit-text-stroke:0.25px #111;color:#111;transform:scaleX(0.9474)">1</div>
<div class="t" style="left:775.5px;top:518px;font-size:13px;-webkit-text-stroke:0.25px #111;color:#111;transform:scaleX(0.8853)">Normal</div>
<div class="t" style="left:966.5px;top:518px;font-size:13px;-webkit-text-stroke:0.25px #111;color:#111;transform:scaleX(0.9742)">07/01/2024</div>
<div class="t" style="left:1056.5px;top:518px;font-size:13px;-webkit-text-stroke:0.25px #111;color:#111;transform:scaleX(0.8983)">Timbrado</div>
<div class="t" style="left:1224.5px;top:518px;font-size:13px;-webkit-text-stroke:0.25px #111;color:#111;transform:scaleX(0.9088)">Enviado</div>
<div class="t" style="left:1303px;top:518px;font-size:13px;-webkit-text-stroke:0.25px #111;color:#111;transform:scaleX(0.9523)">00000000-4f5b-4ecb-a5d5-656252cfb4e9</div>
<div class="a" style="left:42px;top:555px;width:1538px;height:1px;background:#d8d8d8"></div>
<div class="a" style="left:108px;top:530px;width:1px;height:25px;background:#d8d8d8"></div>
<div class="a" style="left:198px;top:530px;width:1px;height:25px;background:#d8d8d8"></div>
<div class="a" style="left:479px;top:530px;width:1px;height:25px;background:#d8d8d8"></div>
<div class="a" style="left:546px;top:530px;width:1px;height:25px;background:#d8d8d8"></div>
<div class="a" style="left:771px;top:530px;width:1px;height:25px;background:#d8d8d8"></div>
<div class="a" style="left:962px;top:530px;width:1px;height:25px;background:#d8d8d8"></div>
<div class="a" style="left:1052px;top:530px;width:1px;height:25px;background:#d8d8d8"></div>
<div class="a" style="left:1220px;top:530px;width:1px;height:25px;background:#d8d8d8"></div>
<div class="a" style="left:1299px;top:530px;width:1px;height:25px;background:#d8d8d8"></div>
<div class="a" style="left:1580px;top:530px;width:1px;height:25px;background:#d8d8d8"></div>
<div class="a" style="left:67px;top:534px;width:15px;height:15px;background:#fff;border-top:2px solid #808080;border-left:2px solid #808080;border-right:1px solid #e4e4e4;border-bottom:1px solid #e4e4e4"></div><svg class="a" style="left:70px;top:537px" width="12" height="10" viewBox="0 0 12 10"><path d="M2.4 3.2 L4.6 6.4 L9.4 0.9" fill="none" stroke="#000" stroke-width="2.5" stroke-linejoin="round"/></svg>
<div class="t" style="left:112px;top:543px;font-size:13px;-webkit-text-stroke:0.25px #111;color:#111;transform:scaleX(0.9474)">0006</div>
<div class="t" style="left:483.5px;top:543px;font-size:13px;-webkit-text-stroke:0.25px #111;color:#111;transform:scaleX(0.9474)">1</div>
<div class="t" style="left:775.5px;top:543px;font-size:13px;-webkit-text-stroke:0.25px #111;color:#111;transform:scaleX(0.8853)">Normal</div>
<div class="t" style="left:966.5px;top:543px;font-size:13px;-webkit-text-stroke:0.25px #111;color:#111;transform:scaleX(0.9742)">07/01/2024</div>
<div class="t" style="left:1056.5px;top:543px;font-size:13px;-webkit-text-stroke:0.25px #111;color:#111;transform:scaleX(0.8983)">Timbrado</div>
<div class="t" style="left:1224.5px;top:543px;font-size:13px;-webkit-text-stroke:0.25px #111;color:#111;transform:scaleX(0.9088)">Enviado</div>
<div class="t" style="left:1303px;top:543px;font-size:13px;-webkit-text-stroke:0.25px #111;color:#111;transform:scaleX(0.9523)">00000000-d9ad-437a-afba-0e4f0044550d</div>
<div class="a" style="left:42px;top:580px;width:1538px;height:1px;background:#d8d8d8"></div>
<div class="a" style="left:108px;top:555px;width:1px;height:25px;background:#d8d8d8"></div>
<div class="a" style="left:198px;top:555px;width:1px;height:25px;background:#d8d8d8"></div>
<div class="a" style="left:479px;top:555px;width:1px;height:25px;background:#d8d8d8"></div>
<div class="a" style="left:546px;top:555px;width:1px;height:25px;background:#d8d8d8"></div>
<div class="a" style="left:771px;top:555px;width:1px;height:25px;background:#d8d8d8"></div>
<div class="a" style="left:962px;top:555px;width:1px;height:25px;background:#d8d8d8"></div>
<div class="a" style="left:1052px;top:555px;width:1px;height:25px;background:#d8d8d8"></div>
<div class="a" style="left:1220px;top:555px;width:1px;height:25px;background:#d8d8d8"></div>
<div class="a" style="left:1299px;top:555px;width:1px;height:25px;background:#d8d8d8"></div>
<div class="a" style="left:1580px;top:555px;width:1px;height:25px;background:#d8d8d8"></div>
<div class="a" style="left:67px;top:559px;width:15px;height:15px;background:#fff;border-top:2px solid #808080;border-left:2px solid #808080;border-right:1px solid #e4e4e4;border-bottom:1px solid #e4e4e4"></div><svg class="a" style="left:70px;top:562px" width="12" height="10" viewBox="0 0 12 10"><path d="M2.4 3.2 L4.6 6.4 L9.4 0.9" fill="none" stroke="#000" stroke-width="2.5" stroke-linejoin="round"/></svg>
<div class="t" style="left:112px;top:568px;font-size:13px;-webkit-text-stroke:0.25px #111;color:#111;transform:scaleX(0.9474)">0007</div>
<div class="t" style="left:483.5px;top:568px;font-size:13px;-webkit-text-stroke:0.25px #111;color:#111;transform:scaleX(0.9474)">1</div>
<div class="t" style="left:775.5px;top:568px;font-size:13px;-webkit-text-stroke:0.25px #111;color:#111;transform:scaleX(0.8853)">Normal</div>
<div class="t" style="left:966.5px;top:568px;font-size:13px;-webkit-text-stroke:0.25px #111;color:#111;transform:scaleX(0.9742)">07/01/2024</div>
<div class="t" style="left:1056.5px;top:568px;font-size:13px;-webkit-text-stroke:0.25px #111;color:#111;transform:scaleX(0.8983)">Timbrado</div>
<div class="t" style="left:1224.5px;top:568px;font-size:13px;-webkit-text-stroke:0.25px #111;color:#111;transform:scaleX(0.9088)">Enviado</div>
<div class="t" style="left:1303px;top:568px;font-size:13px;-webkit-text-stroke:0.25px #111;color:#111;transform:scaleX(0.9523)">00000000-dbe7-4674-8a15-2e546833d91b</div>
<div class="a" style="left:42px;top:605px;width:1538px;height:1px;background:#d8d8d8"></div>
<div class="a" style="left:108px;top:580px;width:1px;height:25px;background:#d8d8d8"></div>
<div class="a" style="left:198px;top:580px;width:1px;height:25px;background:#d8d8d8"></div>
<div class="a" style="left:479px;top:580px;width:1px;height:25px;background:#d8d8d8"></div>
<div class="a" style="left:546px;top:580px;width:1px;height:25px;background:#d8d8d8"></div>
<div class="a" style="left:771px;top:580px;width:1px;height:25px;background:#d8d8d8"></div>
<div class="a" style="left:962px;top:580px;width:1px;height:25px;background:#d8d8d8"></div>
<div class="a" style="left:1052px;top:580px;width:1px;height:25px;background:#d8d8d8"></div>
<div class="a" style="left:1220px;top:580px;width:1px;height:25px;background:#d8d8d8"></div>
<div class="a" style="left:1299px;top:580px;width:1px;height:25px;background:#d8d8d8"></div>
<div class="a" style="left:1580px;top:580px;width:1px;height:25px;background:#d8d8d8"></div>
<div class="a" style="left:67px;top:584px;width:15px;height:15px;background:#fff;border-top:2px solid #808080;border-left:2px solid #808080;border-right:1px solid #e4e4e4;border-bottom:1px solid #e4e4e4"></div><svg class="a" style="left:70px;top:587px" width="12" height="10" viewBox="0 0 12 10"><path d="M2.4 3.2 L4.6 6.4 L9.4 0.9" fill="none" stroke="#000" stroke-width="2.5" stroke-linejoin="round"/></svg>
<div class="t" style="left:112px;top:593px;font-size:13px;-webkit-text-stroke:0.25px #111;color:#111;transform:scaleX(0.9474)">0008</div>
<div class="t" style="left:483.5px;top:593px;font-size:13px;-webkit-text-stroke:0.25px #111;color:#111;transform:scaleX(0.9474)">1</div>
<div class="t" style="left:775.5px;top:593px;font-size:13px;-webkit-text-stroke:0.25px #111;color:#111;transform:scaleX(0.8853)">Normal</div>
<div class="t" style="left:966.5px;top:593px;font-size:13px;-webkit-text-stroke:0.25px #111;color:#111;transform:scaleX(0.9742)">07/01/2024</div>
<div class="t" style="left:1056.5px;top:593px;font-size:13px;-webkit-text-stroke:0.25px #111;color:#111;transform:scaleX(0.8983)">Timbrado</div>
<div class="t" style="left:1224.5px;top:593px;font-size:13px;-webkit-text-stroke:0.25px #111;color:#111;transform:scaleX(0.9088)">Enviado</div>
<div class="t" style="left:1303px;top:593px;font-size:13px;-webkit-text-stroke:0.25px #111;color:#111;transform:scaleX(0.9523)">00000000-089a-43ba-bb32-ecc9f8a02c7c</div>
<div class="a" style="left:42px;top:630px;width:1538px;height:1px;background:#d8d8d8"></div>
<div class="a" style="left:108px;top:605px;width:1px;height:25px;background:#d8d8d8"></div>
<div class="a" style="left:198px;top:605px;width:1px;height:25px;background:#d8d8d8"></div>
<div class="a" style="left:479px;top:605px;width:1px;height:25px;background:#d8d8d8"></div>
<div class="a" style="left:546px;top:605px;width:1px;height:25px;background:#d8d8d8"></div>
<div class="a" style="left:771px;top:605px;width:1px;height:25px;background:#d8d8d8"></div>
<div class="a" style="left:962px;top:605px;width:1px;height:25px;background:#d8d8d8"></div>
<div class="a" style="left:1052px;top:605px;width:1px;height:25px;background:#d8d8d8"></div>
<div class="a" style="left:1220px;top:605px;width:1px;height:25px;background:#d8d8d8"></div>
<div class="a" style="left:1299px;top:605px;width:1px;height:25px;background:#d8d8d8"></div>
<div class="a" style="left:1580px;top:605px;width:1px;height:25px;background:#d8d8d8"></div>
<div class="a" style="left:67px;top:609px;width:15px;height:15px;background:#fff;border-top:2px solid #808080;border-left:2px solid #808080;border-right:1px solid #e4e4e4;border-bottom:1px solid #e4e4e4"></div><svg class="a" style="left:70px;top:612px" width="12" height="10" viewBox="0 0 12 10"><path d="M2.4 3.2 L4.6 6.4 L9.4 0.9" fill="none" stroke="#000" stroke-width="2.5" stroke-linejoin="round"/></svg>
<div class="t" style="left:112px;top:618px;font-size:13px;-webkit-text-stroke:0.25px #111;color:#111;transform:scaleX(0.9474)">0009</div>
<div class="t" style="left:483.5px;top:618px;font-size:13px;-webkit-text-stroke:0.25px #111;color:#111;transform:scaleX(0.9474)">1</div>
<div class="t" style="left:775.5px;top:618px;font-size:13px;-webkit-text-stroke:0.25px #111;color:#111;transform:scaleX(0.8853)">Normal</div>
<div class="t" style="left:966.5px;top:618px;font-size:13px;-webkit-text-stroke:0.25px #111;color:#111;transform:scaleX(0.9742)">07/01/2024</div>
<div class="t" style="left:1056.5px;top:618px;font-size:13px;-webkit-text-stroke:0.25px #111;color:#111;transform:scaleX(0.8983)">Timbrado</div>
<div class="t" style="left:1224.5px;top:618px;font-size:13px;-webkit-text-stroke:0.25px #111;color:#111;transform:scaleX(0.9088)">Enviado</div>
<div class="t" style="left:1303px;top:618px;font-size:13px;-webkit-text-stroke:0.25px #111;color:#111;transform:scaleX(0.9523)">00000000-f0ee-4b9d-b007-c467cc14877a</div>
<div class="a" style="left:42px;top:655px;width:1538px;height:1px;background:#d8d8d8"></div>
<div class="a" style="left:108px;top:630px;width:1px;height:25px;background:#d8d8d8"></div>
<div class="a" style="left:198px;top:630px;width:1px;height:25px;background:#d8d8d8"></div>
<div class="a" style="left:479px;top:630px;width:1px;height:25px;background:#d8d8d8"></div>
<div class="a" style="left:546px;top:630px;width:1px;height:25px;background:#d8d8d8"></div>
<div class="a" style="left:771px;top:630px;width:1px;height:25px;background:#d8d8d8"></div>
<div class="a" style="left:962px;top:630px;width:1px;height:25px;background:#d8d8d8"></div>
<div class="a" style="left:1052px;top:630px;width:1px;height:25px;background:#d8d8d8"></div>
<div class="a" style="left:1220px;top:630px;width:1px;height:25px;background:#d8d8d8"></div>
<div class="a" style="left:1299px;top:630px;width:1px;height:25px;background:#d8d8d8"></div>
<div class="a" style="left:1580px;top:630px;width:1px;height:25px;background:#d8d8d8"></div>
<div class="a" style="left:67px;top:634px;width:15px;height:15px;background:#fff;border-top:2px solid #808080;border-left:2px solid #808080;border-right:1px solid #e4e4e4;border-bottom:1px solid #e4e4e4"></div><svg class="a" style="left:70px;top:637px" width="12" height="10" viewBox="0 0 12 10"><path d="M2.4 3.2 L4.6 6.4 L9.4 0.9" fill="none" stroke="#000" stroke-width="2.5" stroke-linejoin="round"/></svg>
<div class="t" style="left:112px;top:643px;font-size:13px;-webkit-text-stroke:0.25px #111;color:#111;transform:scaleX(0.9474)">0010</div>
<div class="t" style="left:483.5px;top:643px;font-size:13px;-webkit-text-stroke:0.25px #111;color:#111;transform:scaleX(0.9474)">1</div>
<div class="t" style="left:775.5px;top:643px;font-size:13px;-webkit-text-stroke:0.25px #111;color:#111;transform:scaleX(0.8853)">Normal</div>
<div class="t" style="left:966.5px;top:643px;font-size:13px;-webkit-text-stroke:0.25px #111;color:#111;transform:scaleX(0.9742)">07/01/2024</div>
<div class="t" style="left:1056.5px;top:643px;font-size:13px;-webkit-text-stroke:0.25px #111;color:#111;transform:scaleX(0.8983)">Timbrado</div>
<div class="t" style="left:1224.5px;top:643px;font-size:13px;-webkit-text-stroke:0.25px #111;color:#111;transform:scaleX(0.9088)">Enviado</div>
<div class="t" style="left:1303px;top:643px;font-size:13px;-webkit-text-stroke:0.25px #111;color:#111;transform:scaleX(0.9523)">00000000-704e-4e2b-8ff1-744956df8b7e</div>
<div class="a" style="left:42px;top:680px;width:1538px;height:1px;background:#d8d8d8"></div>
<div class="a" style="left:108px;top:655px;width:1px;height:25px;background:#d8d8d8"></div>
<div class="a" style="left:198px;top:655px;width:1px;height:25px;background:#d8d8d8"></div>
<div class="a" style="left:479px;top:655px;width:1px;height:25px;background:#d8d8d8"></div>
<div class="a" style="left:546px;top:655px;width:1px;height:25px;background:#d8d8d8"></div>
<div class="a" style="left:771px;top:655px;width:1px;height:25px;background:#d8d8d8"></div>
<div class="a" style="left:962px;top:655px;width:1px;height:25px;background:#d8d8d8"></div>
<div class="a" style="left:1052px;top:655px;width:1px;height:25px;background:#d8d8d8"></div>
<div class="a" style="left:1220px;top:655px;width:1px;height:25px;background:#d8d8d8"></div>
<div class="a" style="left:1299px;top:655px;width:1px;height:25px;background:#d8d8d8"></div>
<div class="a" style="left:1580px;top:655px;width:1px;height:25px;background:#d8d8d8"></div>
<div class="a" style="left:67px;top:659px;width:15px;height:15px;background:#fff;border-top:2px solid #808080;border-left:2px solid #808080;border-right:1px solid #e4e4e4;border-bottom:1px solid #e4e4e4"></div><svg class="a" style="left:70px;top:662px" width="12" height="10" viewBox="0 0 12 10"><path d="M2.4 3.2 L4.6 6.4 L9.4 0.9" fill="none" stroke="#000" stroke-width="2.5" stroke-linejoin="round"/></svg>
<div class="t" style="left:112px;top:668px;font-size:13px;-webkit-text-stroke:0.25px #111;color:#111;transform:scaleX(0.9474)">0011</div>
<div class="t" style="left:483.5px;top:668px;font-size:13px;-webkit-text-stroke:0.25px #111;color:#111;transform:scaleX(0.9474)">1</div>
<div class="t" style="left:775.5px;top:668px;font-size:13px;-webkit-text-stroke:0.25px #111;color:#111;transform:scaleX(0.8853)">Normal</div>
<div class="t" style="left:966.5px;top:668px;font-size:13px;-webkit-text-stroke:0.25px #111;color:#111;transform:scaleX(0.9742)">07/01/2024</div>
<div class="t" style="left:1056.5px;top:668px;font-size:13px;-webkit-text-stroke:0.25px #111;color:#111;transform:scaleX(0.8983)">Timbrado</div>
<div class="t" style="left:1224.5px;top:668px;font-size:13px;-webkit-text-stroke:0.25px #111;color:#111;transform:scaleX(0.9088)">Enviado</div>
<div class="t" style="left:1303px;top:668px;font-size:13px;-webkit-text-stroke:0.25px #111;color:#111;transform:scaleX(0.9523)">00000000-c8bc-4b94-b9cb-10230b9a492f</div>
<div class="a" style="left:42px;top:705px;width:1538px;height:1px;background:#d8d8d8"></div>
<div class="a" style="left:108px;top:680px;width:1px;height:25px;background:#d8d8d8"></div>
<div class="a" style="left:198px;top:680px;width:1px;height:25px;background:#d8d8d8"></div>
<div class="a" style="left:479px;top:680px;width:1px;height:25px;background:#d8d8d8"></div>
<div class="a" style="left:546px;top:680px;width:1px;height:25px;background:#d8d8d8"></div>
<div class="a" style="left:771px;top:680px;width:1px;height:25px;background:#d8d8d8"></div>
<div class="a" style="left:962px;top:680px;width:1px;height:25px;background:#d8d8d8"></div>
<div class="a" style="left:1052px;top:680px;width:1px;height:25px;background:#d8d8d8"></div>
<div class="a" style="left:1220px;top:680px;width:1px;height:25px;background:#d8d8d8"></div>
<div class="a" style="left:1299px;top:680px;width:1px;height:25px;background:#d8d8d8"></div>
<div class="a" style="left:1580px;top:680px;width:1px;height:25px;background:#d8d8d8"></div>
<div class="a" style="left:67px;top:684px;width:15px;height:15px;background:#fff;border-top:2px solid #808080;border-left:2px solid #808080;border-right:1px solid #e4e4e4;border-bottom:1px solid #e4e4e4"></div><svg class="a" style="left:70px;top:687px" width="12" height="10" viewBox="0 0 12 10"><path d="M2.4 3.2 L4.6 6.4 L9.4 0.9" fill="none" stroke="#000" stroke-width="2.5" stroke-linejoin="round"/></svg>
<div class="t" style="left:112px;top:693px;font-size:13px;-webkit-text-stroke:0.25px #111;color:#111;transform:scaleX(0.9474)">0012</div>
<div class="t" style="left:483.5px;top:693px;font-size:13px;-webkit-text-stroke:0.25px #111;color:#111;transform:scaleX(0.9474)">1</div>
<div class="t" style="left:775.5px;top:693px;font-size:13px;-webkit-text-stroke:0.25px #111;color:#111;transform:scaleX(0.8853)">Normal</div>
<div class="t" style="left:966.5px;top:693px;font-size:13px;-webkit-text-stroke:0.25px #111;color:#111;transform:scaleX(0.9742)">07/01/2024</div>
<div class="t" style="left:1056.5px;top:693px;font-size:13px;-webkit-text-stroke:0.25px #111;color:#111;transform:scaleX(0.8983)">Timbrado</div>
<div class="t" style="left:1224.5px;top:693px;font-size:13px;-webkit-text-stroke:0.25px #111;color:#111;transform:scaleX(0.9088)">Enviado</div>
<div class="t" style="left:1303px;top:693px;font-size:13px;-webkit-text-stroke:0.25px #111;color:#111;transform:scaleX(0.9523)">00000000-e6da-471e-b123-d55bf83366ad</div>
</body></html>
